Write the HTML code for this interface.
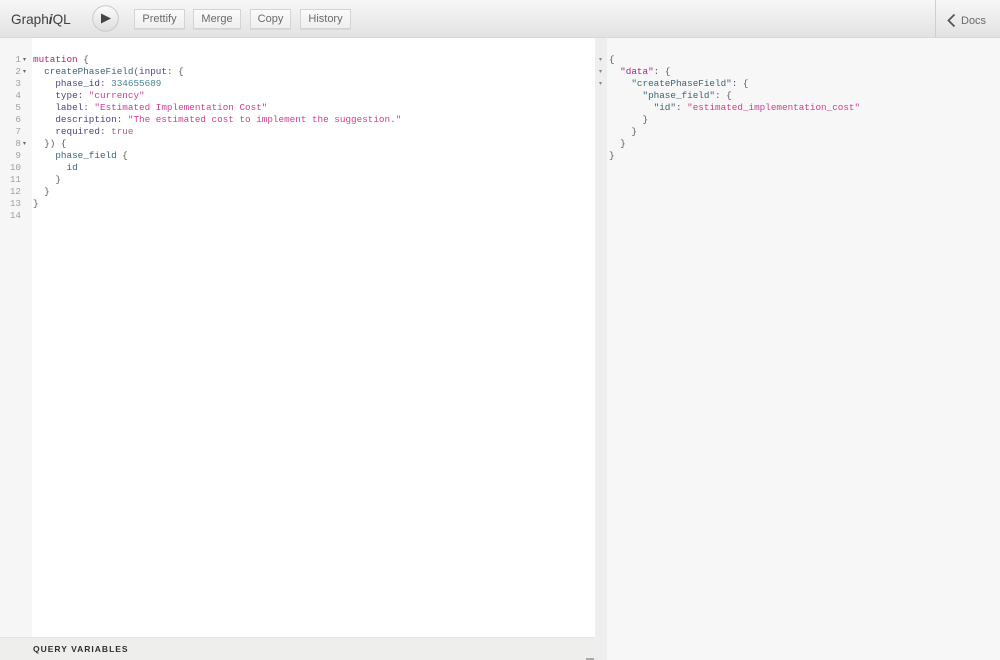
<!DOCTYPE html>
<html><head><meta charset="utf-8">
<style>
html,body{margin:0;padding:0;width:1000px;height:660px;overflow:hidden;background:#fff}
body{position:relative;font-family:"Liberation Sans",sans-serif}
.abs{position:absolute}
#top{left:0;top:0;width:1000px;height:37px;background:linear-gradient(#f7f7f7,#e2e2e2);border-bottom:1px solid #d8d8d8}
.logo{left:11px;top:11px;font-size:13.6px;color:#3f3f3f;line-height:17px}
.btn{top:9px;height:20px;box-sizing:border-box;border:1px solid #d4d4d4;background:linear-gradient(#fbfbfb,#efefef);font-size:11px;color:#6a6a6a;text-align:center;line-height:19px;box-shadow:0 1px 0 rgba(0,0,0,.06)}
.mono{font-family:"Liberation Mono",monospace;font-size:9.3px;line-height:12px;white-space:pre;position:absolute;color:#3a4a55;margin-top:1px}
.n{color:#a0a0a0;text-align:right;width:20px;left:1px}
.k{color:#a8257c}.a{color:#4f4380}.s{color:#cc3f95}.num{color:#4a8296}.f{color:#3a6478}.p{color:#5c5c5c}.b{color:#a9648a}
.t{color:#666;font-size:6px;line-height:12px;position:absolute;margin-top:1px}
</style></head><body>
<div class="abs" style="left:0;top:38px;width:32px;height:599px;background:#f6f6f6"></div>
<div class="abs" style="left:595px;top:38px;width:405px;height:622px;background:#f6f7f6"></div>
<div class="abs" style="left:595px;top:38px;width:12px;height:622px;background:#eeeeee"></div>
<div class="abs" style="left:0;top:637px;width:595px;height:23px;background:#eeeeec;border-top:1px solid #e4e4e4;box-sizing:border-box"></div>
<div class="abs" style="left:33px;top:644px;font-size:8.5px;line-height:10px;font-weight:bold;letter-spacing:1px;color:#2f2f2f">QUERY VARIABLES</div>
<div class="abs" style="left:586px;top:658px;width:8px;height:2px;background:#aaa"></div>

<div class="abs" id="top"></div>
<div class="abs logo">Graph<i style="font-weight:bold">i</i>QL</div>
<svg class="abs" style="left:92px;top:5px" width="27" height="27" viewBox="0 0 27 27">
<defs><linearGradient id="g" x1="0" y1="0" x2="0" y2="1"><stop offset="0" stop-color="#fbfbfb"/><stop offset="1" stop-color="#dedede"/></linearGradient></defs>
<circle cx="13.5" cy="13.5" r="12.8" fill="url(#g)" stroke="#c8c8c8"/>
<path d="M9 8.5 L19 13.5 L9 18.5 Z" fill="#444"/></svg>
<div class="abs btn" style="left:134px;width:51px">Prettify</div>
<div class="abs btn" style="left:193px;width:48px">Merge</div>
<div class="abs btn" style="left:250px;width:41px">Copy</div>
<div class="abs btn" style="left:300px;width:51px">History</div>
<div class="abs" style="left:935px;top:0;width:1px;height:37px;background:#cfcfcf"></div>
<svg class="abs" style="left:946px;top:13px" width="11" height="15" viewBox="0 0 11 15"><path d="M8.5 1.5 L2.5 7.5 L8.5 13.5" fill="none" stroke="#555" stroke-width="1.8"/></svg>
<div class="abs" style="left:961px;top:14px;font-size:11px;line-height:14px;color:#6a6a6a">Docs</div>

<div class="mono n" style="top:53px">1</div>
<div class="mono n" style="top:65px">2</div>
<div class="mono n" style="top:77px">3</div>
<div class="mono n" style="top:89px">4</div>
<div class="mono n" style="top:101px">5</div>
<div class="mono n" style="top:113px">6</div>
<div class="mono n" style="top:125px">7</div>
<div class="mono n" style="top:137px">8</div>
<div class="mono n" style="top:149px">9</div>
<div class="mono n" style="top:161px">10</div>
<div class="mono n" style="top:173px">11</div>
<div class="mono n" style="top:185px">12</div>
<div class="mono n" style="top:197px">13</div>
<div class="mono n" style="top:209px">14</div>
<div class="t" style="left:23px;top:53px">▾</div>
<div class="t" style="left:23px;top:65px">▾</div>
<div class="t" style="left:23px;top:137px">▾</div>

<div class="mono" style="left:33px;top:53px"><span class="k">mutation</span> <span class="p">{</span></div>
<div class="mono" style="left:33px;top:65px">  <span class="f">createPhaseField</span><span class="p">(</span><span class="a">input</span><span class="p">: {</span></div>
<div class="mono" style="left:33px;top:77px">    <span class="a">phase_id</span><span class="p">: </span><span class="num">334655689</span></div>
<div class="mono" style="left:33px;top:89px">    <span class="a">type</span><span class="p">: </span><span class="s">"currency"</span></div>
<div class="mono" style="left:33px;top:101px">    <span class="a">label</span><span class="p">: </span><span class="s">"Estimated Implementation Cost"</span></div>
<div class="mono" style="left:33px;top:113px">    <span class="a">description</span><span class="p">: </span><span class="s">"The estimated cost to implement the suggestion."</span></div>
<div class="mono" style="left:33px;top:125px">    <span class="a">required</span><span class="p">: </span><span class="b">true</span></div>
<div class="mono" style="left:33px;top:137px">  <span class="p">}) {</span></div>
<div class="mono" style="left:33px;top:149px">    <span class="f">phase_field</span> <span class="p">{</span></div>
<div class="mono" style="left:33px;top:161px">      <span class="f">id</span></div>
<div class="mono" style="left:33px;top:173px">    <span class="p">}</span></div>
<div class="mono" style="left:33px;top:185px">  <span class="p">}</span></div>
<div class="mono" style="left:33px;top:197px"><span class="p">}</span></div>

<div class="t" style="left:599px;top:53px;color:#888">▾</div>
<div class="t" style="left:599px;top:65px;color:#888">▾</div>
<div class="t" style="left:599px;top:77px;color:#888">▾</div>
<div class="mono" style="left:609px;top:53px"><span class="p">{</span></div>
<div class="mono" style="left:609px;top:65px">  <span class="k">"data"</span><span class="p">: {</span></div>
<div class="mono" style="left:609px;top:77px">    <span class="f">"createPhaseField"</span><span class="p">: {</span></div>
<div class="mono" style="left:609px;top:89px">      <span class="f">"phase_field"</span><span class="p">: {</span></div>
<div class="mono" style="left:609px;top:101px">        <span class="f">"id"</span><span class="p">: </span><span class="s">"estimated_implementation_cost"</span></div>
<div class="mono" style="left:609px;top:113px">      <span class="p">}</span></div>
<div class="mono" style="left:609px;top:125px">    <span class="p">}</span></div>
<div class="mono" style="left:609px;top:137px">  <span class="p">}</span></div>
<div class="mono" style="left:609px;top:149px"><span class="p">}</span></div>
</body></html>
